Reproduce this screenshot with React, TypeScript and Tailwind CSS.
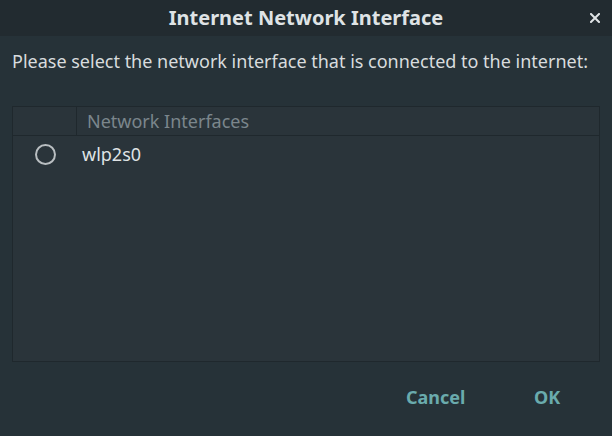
export default function App() {
  return (
    <div
      className="w-[612px] h-[436px] flex flex-col bg-[#263238] text-[#e0e4e6]"
      style={{ fontFamily: '"Noto Sans", "Open Sans", sans-serif' }}
    >
      {/* title bar */}
      <div className="relative h-[36px] flex items-center justify-center bg-[#222b30]">
        <span className="text-[20px] leading-[24px] font-bold text-[#dfe3e5]">Internet Network Interface</span>
        <svg className="absolute right-[12px] top-[13px]" width="10" height="10" viewBox="0 0 10 10">
          <path d="M1 1L9 9M9 1L1 9" stroke="#dfe3e5" strokeWidth="2" strokeLinecap="square" />
        </svg>
      </div>

      <div className="flex flex-col px-[12px] pt-[14px]">
        <p className="text-[18px] leading-[22px] text-[#d8dcde] whitespace-nowrap">
          Please select the network interface that is connected to the internet:
        </p>

        <div className="mt-[34px] h-[256px] w-[588px] border border-[#1f282d] bg-[#2a343a]">
          <div className="flex h-[29px] border-b border-[#1f282d]">
            <div className="w-[64px] border-r border-[#1f282d]" />
            <div className="pl-[10px] flex items-center text-[18px] text-[#7b868c]">Network Interfaces</div>
          </div>
          <div className="flex h-[36px] items-center">
            <div className="w-[64px] flex justify-center">
              <div className="w-[21px] h-[21px] rounded-full border-2 border-[#b9bec1]" />
            </div>
            <div className="pl-[5px] text-[18px] text-[#dfe3e5]">wlp2s0</div>
          </div>
        </div>

        <div className="flex justify-end mt-[22px] pr-[13px]">
          <button className="w-[128px] text-[18px] font-bold text-[#6aabad] text-left pl-[11px]">Cancel</button>
          <button className="w-[64px] text-[18px] font-bold text-[#6aabad] text-left pl-[11px]">OK</button>
        </div>
      </div>
    </div>
  );
}
